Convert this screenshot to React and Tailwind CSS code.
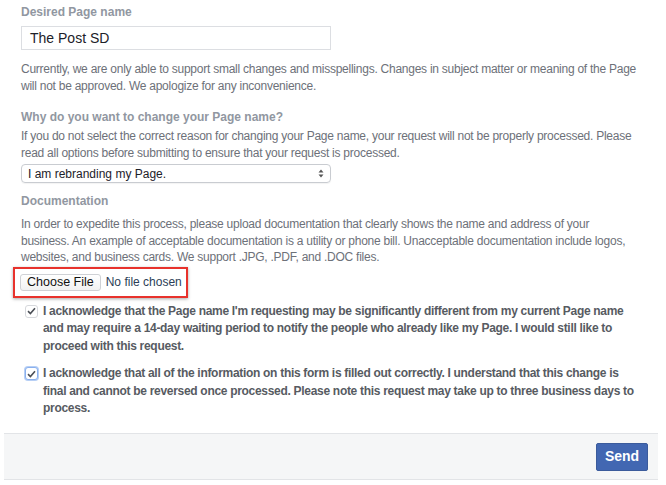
import React from "react";

function Check({ focused }) {
  return (
    <div
      className={`mt-[2px] w-[13px] h-[13px] shrink-0 rounded-[3px] border bg-white flex items-center justify-center ${
        focused ? "border-[#8ab0ee] shadow-[0_0_0_1px_#b7cff5]" : "border-[#d6d8dc]"
      }`}
    >
      <svg width="9" height="8" viewBox="0 0 9 8">
        <path d="M1 4.2 L3.4 6.5 L8 1.3" fill="none" stroke="#4b4f56" strokeWidth="1.6" />
      </svg>
    </div>
  );
}

export default function App() {
  return (
    <div
      className="w-[666px] h-[485px] bg-white overflow-hidden text-[#6d7179]"
      style={{ fontFamily: '"Liberation Sans", Arial, sans-serif' }}
    >
      <div className="ml-[4px] w-[654px] h-[480px] flex flex-col">
        <div className="flex-1 pl-[17px] pr-[8px] pt-[5px]">
          <div className="text-[12px] font-bold text-[#9197a1] leading-[15px]">Desired Page name</div>
          <div className="mt-[6px] w-[310px] h-[24px] border border-[#dcdee2] flex items-center px-[8px] text-[14px] text-[#1d2129]">
            The Post SD
          </div>
          <p className="mt-[11px] text-[12px] tracking-[-0.25px] leading-[17px]">
            Currently, we are only able to support small changes and misspellings. Changes in subject matter or meaning of the Page will not be approved. We apologize for any inconvenience.
          </p>
          <div className="mt-[15px] text-[12px] font-bold text-[#9197a1] leading-[15px]">Why do you want to change your Page name?</div>
          <p className="mt-[3px] text-[12px] tracking-[-0.25px] leading-[17px]">
            If you do not select the correct reason for changing your Page name, your request will not be properly processed. Please read all options before submitting to ensure that your request is processed.
          </p>
          <div className="mt-[2px] w-[310px] h-[19px] border border-[#c9ccd1] rounded-[4px] flex items-center justify-between pl-[6px] pr-[6px] text-[12px] text-[#1d2129] shadow-[0_1px_1px_rgba(0,0,0,0.05)]">
            <span>I am rebranding my Page.</span>
            <svg width="6" height="9" viewBox="0 0 6 9">
              <path d="M0.5 3.5 L3 0.5 L5.5 3.5 Z" fill="#555" />
              <path d="M0.5 5.5 L3 8.5 L5.5 5.5 Z" fill="#555" />
            </svg>
          </div>
          <div className="mt-[11px] text-[12px] font-bold text-[#9197a1] leading-[15px]">Documentation</div>
          <p className="mt-[7px] pr-[20px] text-[12px] tracking-[-0.25px] leading-[16.5px]">
            In order to expedite this process, please upload documentation that clearly shows the name and address of your business. An example of acceptable documentation is a utility or phone bill. Unacceptable documentation include logos, websites, and business cards. We support .JPG, .PDF, and .DOC files.
          </p>
          <div className="mt-[1px] -ml-[8px] w-[175px] h-[31px] border-[2.5px] border-[#e8322c] shadow-[0_1px_3px_rgba(0,0,0,0.35)] flex items-center pl-[5px] gap-[5px]">
            <div className="h-[17px] px-[6px] border border-[#cfd1d5] rounded-[3px] bg-gradient-to-b from-white to-[#f1f1f1] flex items-center text-[12.5px] text-[#111]">
              Choose File
            </div>
            <span className="text-[12px] text-[#2c3e57]">No file chosen</span>
          </div>
          <div className="mt-[5px] ml-[4px] mr-[8px] flex gap-[5px]">
            <Check />
            <p className="text-[12px] tracking-[-0.3px] font-bold leading-[17.5px] text-[#575b62]">
              I acknowledge that the Page name I'm requesting may be significantly different from my current Page name and may require a 14-day waiting period to notify the people who already like my Page. I would still like to proceed with this request.
            </p>
          </div>
          <div className="mt-[10px] ml-[4px] mr-[8px] flex gap-[5px]">
            <Check focused />
            <p className="text-[12px] tracking-[-0.3px] font-bold leading-[17.5px] text-[#575b62]">
              I acknowledge that all of the information on this form is filled out correctly. I understand that this change is final and cannot be reversed once processed. Please note this request may take up to three business days to process.
            </p>
          </div>
        </div>
        <div className="h-[47px] shrink-0 bg-[#f5f6f7] border-t border-b border-[#e2e4e7] flex items-center justify-end pr-[10px]">
          <div className="w-[52px] h-[28px] rounded-[2px] bg-[#4267b2] border border-[#3b5b9c] flex items-center justify-center text-[14px] font-bold text-white">
            Send
          </div>
        </div>
      </div>
    </div>
  );
}
